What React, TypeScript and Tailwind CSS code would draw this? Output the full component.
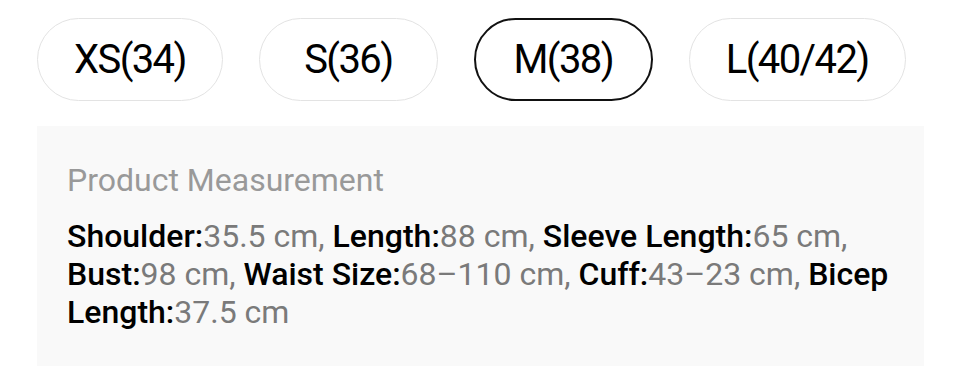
import React from 'react';

const sizes = [
  { label: 'XS(34)', active: false },
  { label: 'S(36)', active: false },
  { label: 'M(38)', active: true },
  { label: 'L(40/42)', active: false },
];

const measurements = [
  { name: 'Shoulder', value: '35.5 cm' },
  { name: 'Length', value: '88 cm' },
  { name: 'Sleeve Length', value: '65 cm' },
  { name: 'Bust', value: '98 cm' },
  { name: 'Waist Size', value: '68–110 cm' },
  { name: 'Cuff', value: '43–23 cm' },
  { name: 'Bicep Length', value: '37.5 cm' },
];

export default function App() {
  return (
    <div className="min-h-screen bg-white pl-[37px] pr-[36px] pt-[18px] font-['Roboto',sans-serif]">
      <div className="flex gap-[36px]">
        {sizes.map((s) => (
          <button
            key={s.label}
            className={`flex h-[83px] min-w-[179px] items-center justify-center rounded-full px-[36px] text-[40px] tracking-[-1.6px] text-black ${
              s.active ? 'border-2 border-[#111]' : 'border-[1.5px] border-[#e3e3e3]'
            }`}
          >
            {s.label}
          </button>
        ))}
      </div>

      <div className="mt-[25px] h-[240px] bg-[#f9f9f9] px-[30px] pt-[34px]">
        <h3 className="text-[32px] leading-[40px] text-[#999999]">Product Measurement</h3>
        <p className="mt-[17px] text-[32px] leading-[38px] text-black">
          {measurements.map((m, i) => (
            <React.Fragment key={m.name}>
              <span className="font-medium">{m.name}:</span>
              <span className="text-[#7a7a7a]">{m.value}</span>
              {i < measurements.length - 1 && <span className="text-[#7a7a7a]">, </span>}
            </React.Fragment>
          ))}
        </p>
      </div>
    </div>
  );
}
